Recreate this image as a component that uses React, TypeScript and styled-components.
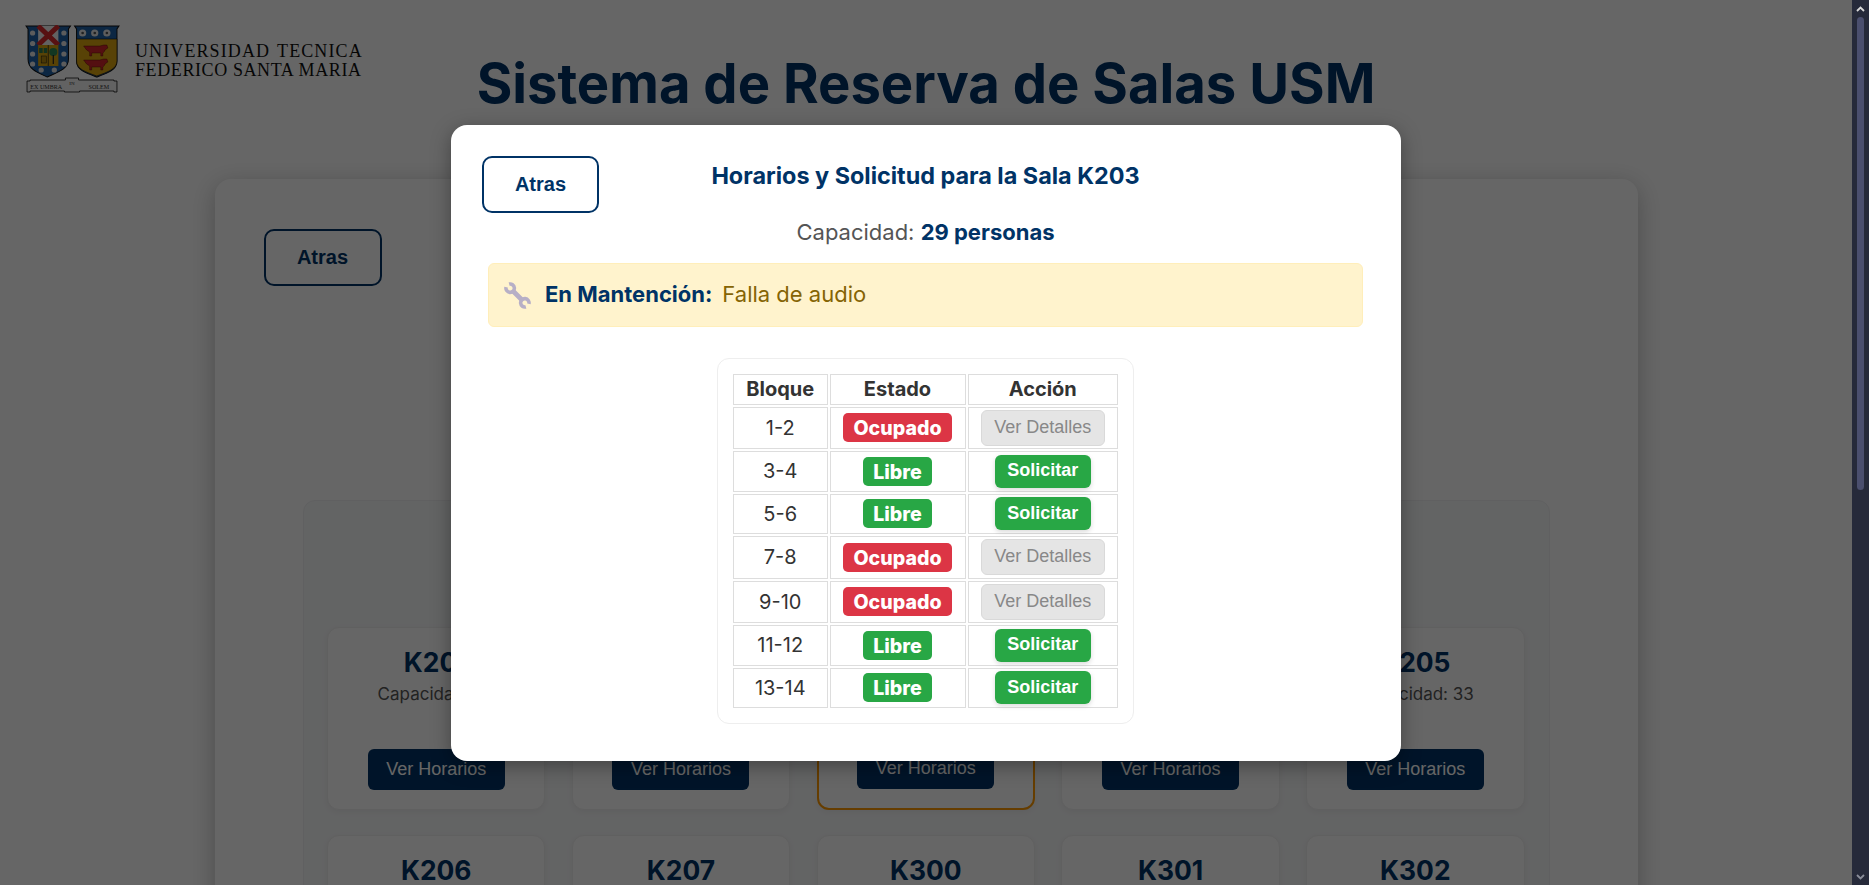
import React from "react";
import styled, { createGlobalStyle } from "styled-components";

const Global = createGlobalStyle`
  html, body { margin: 0; padding: 0; height: 100%; overflow: hidden; background: #fff; }
  body { font-family: "Inter", "Liberation Sans", sans-serif; }
  #root { height: 100%; }
  * { box-sizing: border-box; }
`;

const Shell = styled.div`
  display: flex;
  height: 885px;
  width: 100%;
`;
const Viewport = styled.div`
  position: relative;
  flex: 1;
  min-width: 0;
  overflow: hidden;
  background: #fff;
`;
const Scrollbar = styled.aside`
  width: 17px;
  flex: none;
  background: #262a3a;
  display: flex;
  flex-direction: column;
  align-items: center;
  justify-content: space-between;
`;
const ScrollTrack = styled.div`
  flex: 1;
  width: 100%;
  display: flex;
  justify-content: center;
  align-items: flex-start;
`;
const ScrollThumb = styled.div`
  width: 7px;
  height: 473px;
  border-radius: 4px;
  background: #4b4f6e;
`;
const ArrowBox = styled.div`
  height: 17px;
  width: 17px;
  display: flex;
  align-items: center;
  justify-content: center;
`;

const Header = styled.header`
  display: grid;
  grid-template-columns: 1fr auto 1fr;
  height: 179px;
  padding-top: 25px;
  align-items: start;
`;
const Brand = styled.div`
  display: flex;
  align-items: flex-start;
  padding-left: 24px;
  gap: 15px;
`;
const BrandText = styled.div`
  font-family: "Liberation Serif", serif;
  font-size: 18px;
  line-height: 19px;
  color: #111;
  white-space: nowrap;
  padding-top: 17px;
`;
const BrandLine = styled.span<{ $tracking: number; $wordGap: number }>`
  display: block;
  letter-spacing: ${(p) => p.$tracking}px;
  word-spacing: ${(p) => p.$wordGap}px;
`;
const Title = styled.h1`
  margin: 24px 0 0;
  font-size: 54.4px;
  line-height: 68px;
  font-weight: 700;
  color: #003366;
  white-space: nowrap;
`;
const Panel = styled.main`
  width: 1423px;
  margin: 0 auto;
  background: #fff;
  border-radius: 16px;
  box-shadow: 0 6px 24px rgba(0, 0, 0, 0.25);
  padding: 50px 88px 60px;
`;
const BackButton = styled.button`
  display: block;
  width: 118px;
  height: 57px;
  margin-left: -39px;
  background: #fff;
  border: 2px solid #003366;
  border-radius: 10px;
  color: #003366;
  font-family: "Liberation Sans", sans-serif;
  font-weight: 700;
  font-size: 20px;
`;
const Section = styled.section`
  margin-top: 214px;
  background: #f8f9fa;
  border: 1px solid #f0f1f2;
  border-radius: 12px;
  padding: 126px 23.5px 30px;
`;
const CardGrid = styled.div`
  display: grid;
  grid-template-columns: repeat(5, 218.4px);
  column-gap: 26.4px;
  row-gap: 25px;
`;
const Card = styled.article<{ $active?: boolean }>`
  height: 183px;
  background: #fff;
  border: ${(p) => (p.$active ? "2px solid #ff9a00" : "1px solid #f0f0f0")};
  border-radius: 12px;
  box-shadow: 0 2px 6px rgba(0, 0, 0, 0.05);
  padding: 17px 0 19px;
  display: flex;
  flex-direction: column;
  align-items: center;
`;
const CardTitle = styled.h3`
  margin: 0;
  font-size: 26.4px;
  line-height: 34px;
  font-weight: 700;
  color: #003366;
`;
const CardText = styled.p`
  margin: 4px 0 0;
  font-size: 17px;
  line-height: 22px;
  color: #555;
`;
const ViewButton = styled.button`
  margin-top: auto;
  width: 137px;
  height: 41px;
  border: none;
  border-radius: 6px;
  background: #003366;
  color: #fff;
  font-family: "Liberation Sans", sans-serif;
  font-size: 18px;
`;

const Overlay = styled.div`
  position: absolute;
  left: 0;
  top: 0;
  width: 100%;
  height: 885px;
  background: rgba(0, 0, 0, 0.6);
  display: flex;
  align-items: center;
  justify-content: center;
`;
const Modal = styled.div`
  position: relative;
  width: 950px;
  background: #fff;
  border-radius: 16px;
  box-shadow: 0 5px 20px rgba(0, 0, 0, 0.35);
  padding: 36px 38px 37px 37px;
  display: flex;
  flex-direction: column;
  align-items: center;
`;
const ModalBack = styled(BackButton)`
  position: absolute;
  left: 31px;
  top: 31px;
  width: 117px;
  margin: 0;
`;
const ModalTitle = styled.h2`
  margin: 0;
  font-size: 23.4px;
  line-height: 29px;
  font-weight: 700;
  color: #003366;
`;
const Capacity = styled.p`
  margin: 29px 0 0;
  font-size: 22px;
  line-height: 26px;
  color: #555;
  strong {
    font-weight: 700;
    color: #003366;
  }
`;
const Alert = styled.div`
  align-self: stretch;
  margin-top: 18px;
  height: 64px;
  background: #fff3cd;
  border: 1px solid #ffeeba;
  border-radius: 6px;
  padding: 0 0 2px 15px;
  display: flex;
  align-items: center;
  font-size: 22px;
  color: #856404;
`;
const AlertLabel = styled.strong`
  margin: 0 10px 0 14px;
  font-weight: 700;
  color: #003366;
`;
const WrenchSvg = styled.svg`
  flex: none;
  margin-top: 3px;
`;
const TableCard = styled.div`
  margin-top: 31px;
  background: #fff;
  border: 1px solid #eeeeee;
  border-radius: 12px;
  padding: 13px;
`;
const Table = styled.table`
  border-collapse: separate;
  border-spacing: 2px;
  table-layout: fixed;
  width: 389px;
  color: #333;
  font-size: 20px;
`;
const Th = styled.th`
  border: 1px solid #dddddd;
  height: 31px;
  padding: 0;
  font-size: 20px;
  font-weight: 700;
  text-align: center;
`;
const Td = styled.td<{ $h: number }>`
  border: 1px solid #dddddd;
  height: ${(p) => p.$h}px;
  padding: 0;
  text-align: center;
`;
const CellCenter = styled.div`
  display: flex;
  align-items: center;
  justify-content: center;
`;
const Badge = styled.span<{ $free: boolean }>`
  display: block;
  height: 29px;
  width: ${(p) => (p.$free ? 69 : 109)}px;
  border-radius: 5px;
  background: ${(p) => (p.$free ? "#28a745" : "#dc3545")};
  color: #fff;
  font-weight: 800;
  font-size: 19.6px;
  line-height: 30px;
`;
const RequestButton = styled.button`
  width: 96px;
  height: 33px;
  padding: 0 0 1px;
  border: none;
  border-radius: 6px;
  background: #28a745;
  color: #fff;
  font-family: "Liberation Sans", sans-serif;
  font-weight: 700;
  font-size: 18px;
  box-shadow: 0 2px 5px rgba(0, 0, 0, 0.15);
`;
const DetailsButton = styled.button`
  width: 124px;
  height: 36px;
  padding: 0 0 1px;
  border: 1px solid #d9d9d9;
  border-radius: 6px;
  background: #e5e5e5;
  color: #888;
  font-family: "Liberation Sans", sans-serif;
  font-size: 18px;
`;

const rooms = [
  ["K201", 30],
  ["K202", 31],
  ["K203", 29],
  ["K204", 32],
  ["K205", 33],
  ["K206", 30],
  ["K207", 28],
  ["K300", 35],
  ["K301", 30],
  ["K302", 32],
] as const;

const rows = [
  { b: "1-2", free: false, h: 42 },
  { b: "3-4", free: true, h: 41 },
  { b: "5-6", free: true, h: 40 },
  { b: "7-8", free: false, h: 43 },
  { b: "9-10", free: false, h: 42 },
  { b: "11-12", free: true, h: 41 },
  { b: "13-14", free: true, h: 40 },
];

function Crest() {
  return (
    <svg width="96" height="70" viewBox="0 0 95 70" preserveAspectRatio="none">
      <path d="M2 1h44l-2 3v30c0 10-10 13-21 18C12 47 4 44 4 34V4z" fill="#1f63a8" stroke="#111" strokeWidth="1" />
      <rect x="14" y="1" width="20" height="19" fill="#f4f4f4" />
      <path d="M14 1l20 19M34 1L14 20" stroke="#d92b2f" strokeWidth="5" />
      <rect x="14" y="20" width="20" height="21" fill="#d9a510" />
      <line x1="24" y1="20" x2="24" y2="41" stroke="#111" strokeWidth="0.7" />
      <rect x="15" y="23" width="3.5" height="5" fill="#2d7a4f" />
      <rect x="19.5" y="23" width="3.5" height="5" fill="#2d7a4f" />
      <rect x="17" y="31" width="5" height="7" fill="#b58a10" stroke="#111" strokeWidth="0.5" />
      <circle cx="29" cy="27" r="4" fill="#2d8a55" />
      <rect x="28.4" y="30" width="1.2" height="9" fill="#222" />
      {[8, 18.5, 29, 39].map((y) => (
        <React.Fragment key={y}>
          <circle cx="8.5" cy={y} r="2.6" fill="#e6e6e6" />
          <circle cx="39.5" cy={y} r="2.6" fill="#e6e6e6" />
        </React.Fragment>
      ))}
      <circle cx="17" cy="45" r="2.6" fill="#e6e6e6" />
      <circle cx="30" cy="45" r="2.6" fill="#e6e6e6" />
      <path d="M50 1h44l-2 3v32c0 9-9 12-20 16-11-4-20-7-20-16V4z" fill="#1f63a8" stroke="#111" strokeWidth="1" />
      <path d="M52 14h40v22c0 8-9 11-20 15-11-4-20-7-20-15z" fill="#dca511" stroke="#111" strokeWidth="0.6" />
      {[58, 70, 82].map((x) => (
        <g key={x}>
          <circle cx={x} cy="8" r="3.6" fill="#e8e8e8" />
          <circle cx={x} cy="8" r="1.3" fill="#555" />
        </g>
      ))}
      {[21, 35].map((y) => (
        <path
          key={y}
          d={`M59 ${y}h16l4-1h3l1 3-3 2v1l-2 2v3h-2v-3h-9v3h-2v-4l-3-2z`}
          fill="#d1272b"
          stroke="#400"
          strokeWidth="0.4"
        />
      ))}
      <path d="M3 56h3v-1h35v-2h13v2h35v1h3v11h-3v-1H55v1H40v-1H6v1H3z" fill="#f4f4f4" stroke="#111" strokeWidth="0.8" />
      <text x="22" y="64" textAnchor="middle" fontFamily="Liberation Serif, serif" fontSize="6" fill="#333">EX UMBRA</text>
      <text x="47.5" y="60" textAnchor="middle" fontFamily="Liberation Serif, serif" fontSize="5" fill="#333">IN</text>
      <text x="74" y="64" textAnchor="middle" fontFamily="Liberation Serif, serif" fontSize="6" fill="#333">SOLEM</text>
    </svg>
  );
}

function WrenchIcon() {
  return (
    <WrenchSvg width="27" height="27" viewBox="0 0 27 27" fill="none" stroke="#b7afc6">
      <path d="M8.5 8.5l10 10" strokeWidth="4.8" />
      <path d="M5.1 2.1A4.2 4.2 0 1 1 2.1 5.1" strokeWidth="3.6" />
      <path d="M21.9 24.9A4.2 4.2 0 1 1 24.9 21.9" strokeWidth="3.6" />
    </WrenchSvg>
  );
}

function ArrowIcon({ up, color }: { up: boolean; color: string }) {
  return (
    <svg width="9" height="6" viewBox="0 0 9 6" fill="none" stroke={color} strokeWidth="1.8">
      <path d={up ? "M1 5l3.5-3.5L8 5" : "M1 1l3.5 3.5L8 1"} />
    </svg>
  );
}

export default function App() {
  return (
    <Shell>
      <Global />
      <Viewport>
        <Header>
          <Brand>
            <Crest />
            <BrandText>
              <BrandLine $tracking={1.1} $wordGap={1.7}>UNIVERSIDAD TECNICA</BrandLine>
              <BrandLine $tracking={0.6} $wordGap={0}>FEDERICO SANTA MARIA</BrandLine>
            </BrandText>
          </Brand>
          <Title>Sistema de Reserva de Salas USM</Title>
          <div />
        </Header>
        <Panel>
          <BackButton>Atras</BackButton>
          <Section>
            <CardGrid>
              {rooms.map(([name, cap]) => (
                <Card key={name} $active={name === "K203"}>
                  <CardTitle>{name}</CardTitle>
                  <CardText>Capacidad: {cap}</CardText>
                  <ViewButton>Ver Horarios</ViewButton>
                </Card>
              ))}
            </CardGrid>
          </Section>
        </Panel>
        <Overlay>
          <Modal>
            <ModalBack>Atras</ModalBack>
            <ModalTitle>Horarios y Solicitud para la Sala K203</ModalTitle>
            <Capacity>
              Capacidad: <strong>29 personas</strong>
            </Capacity>
            <Alert>
              <WrenchIcon />
              <AlertLabel>En Mantención:</AlertLabel>
              Falla de audio
            </Alert>
            <TableCard>
              <Table>
                <colgroup>
                  <col style={{ width: 94.5 }} />
                  <col style={{ width: 136 }} />
                  <col />
                </colgroup>
                <thead>
                  <tr>
                    <Th>Bloque</Th>
                    <Th>Estado</Th>
                    <Th>Acción</Th>
                  </tr>
                </thead>
                <tbody>
                  {rows.map((r) => (
                    <tr key={r.b}>
                      <Td $h={r.h}>{r.b}</Td>
                      <Td $h={r.h}>
                        <CellCenter>
                          <Badge $free={r.free}>{r.free ? "Libre" : "Ocupado"}</Badge>
                        </CellCenter>
                      </Td>
                      <Td $h={r.h}>
                        <CellCenter>
                          {r.free ? <RequestButton>Solicitar</RequestButton> : <DetailsButton>Ver Detalles</DetailsButton>}
                        </CellCenter>
                      </Td>
                    </tr>
                  ))}
                </tbody>
              </Table>
            </TableCard>
          </Modal>
        </Overlay>
      </Viewport>
      <Scrollbar>
        <ArrowBox>
          <ArrowIcon up color="#d8d8d8" />
        </ArrowBox>
        <ScrollTrack>
          <ScrollThumb />
        </ScrollTrack>
        <ArrowBox>
          <ArrowIcon up={false} color="#8a8d99" />
        </ArrowBox>
      </Scrollbar>
    </Shell>
  );
}
